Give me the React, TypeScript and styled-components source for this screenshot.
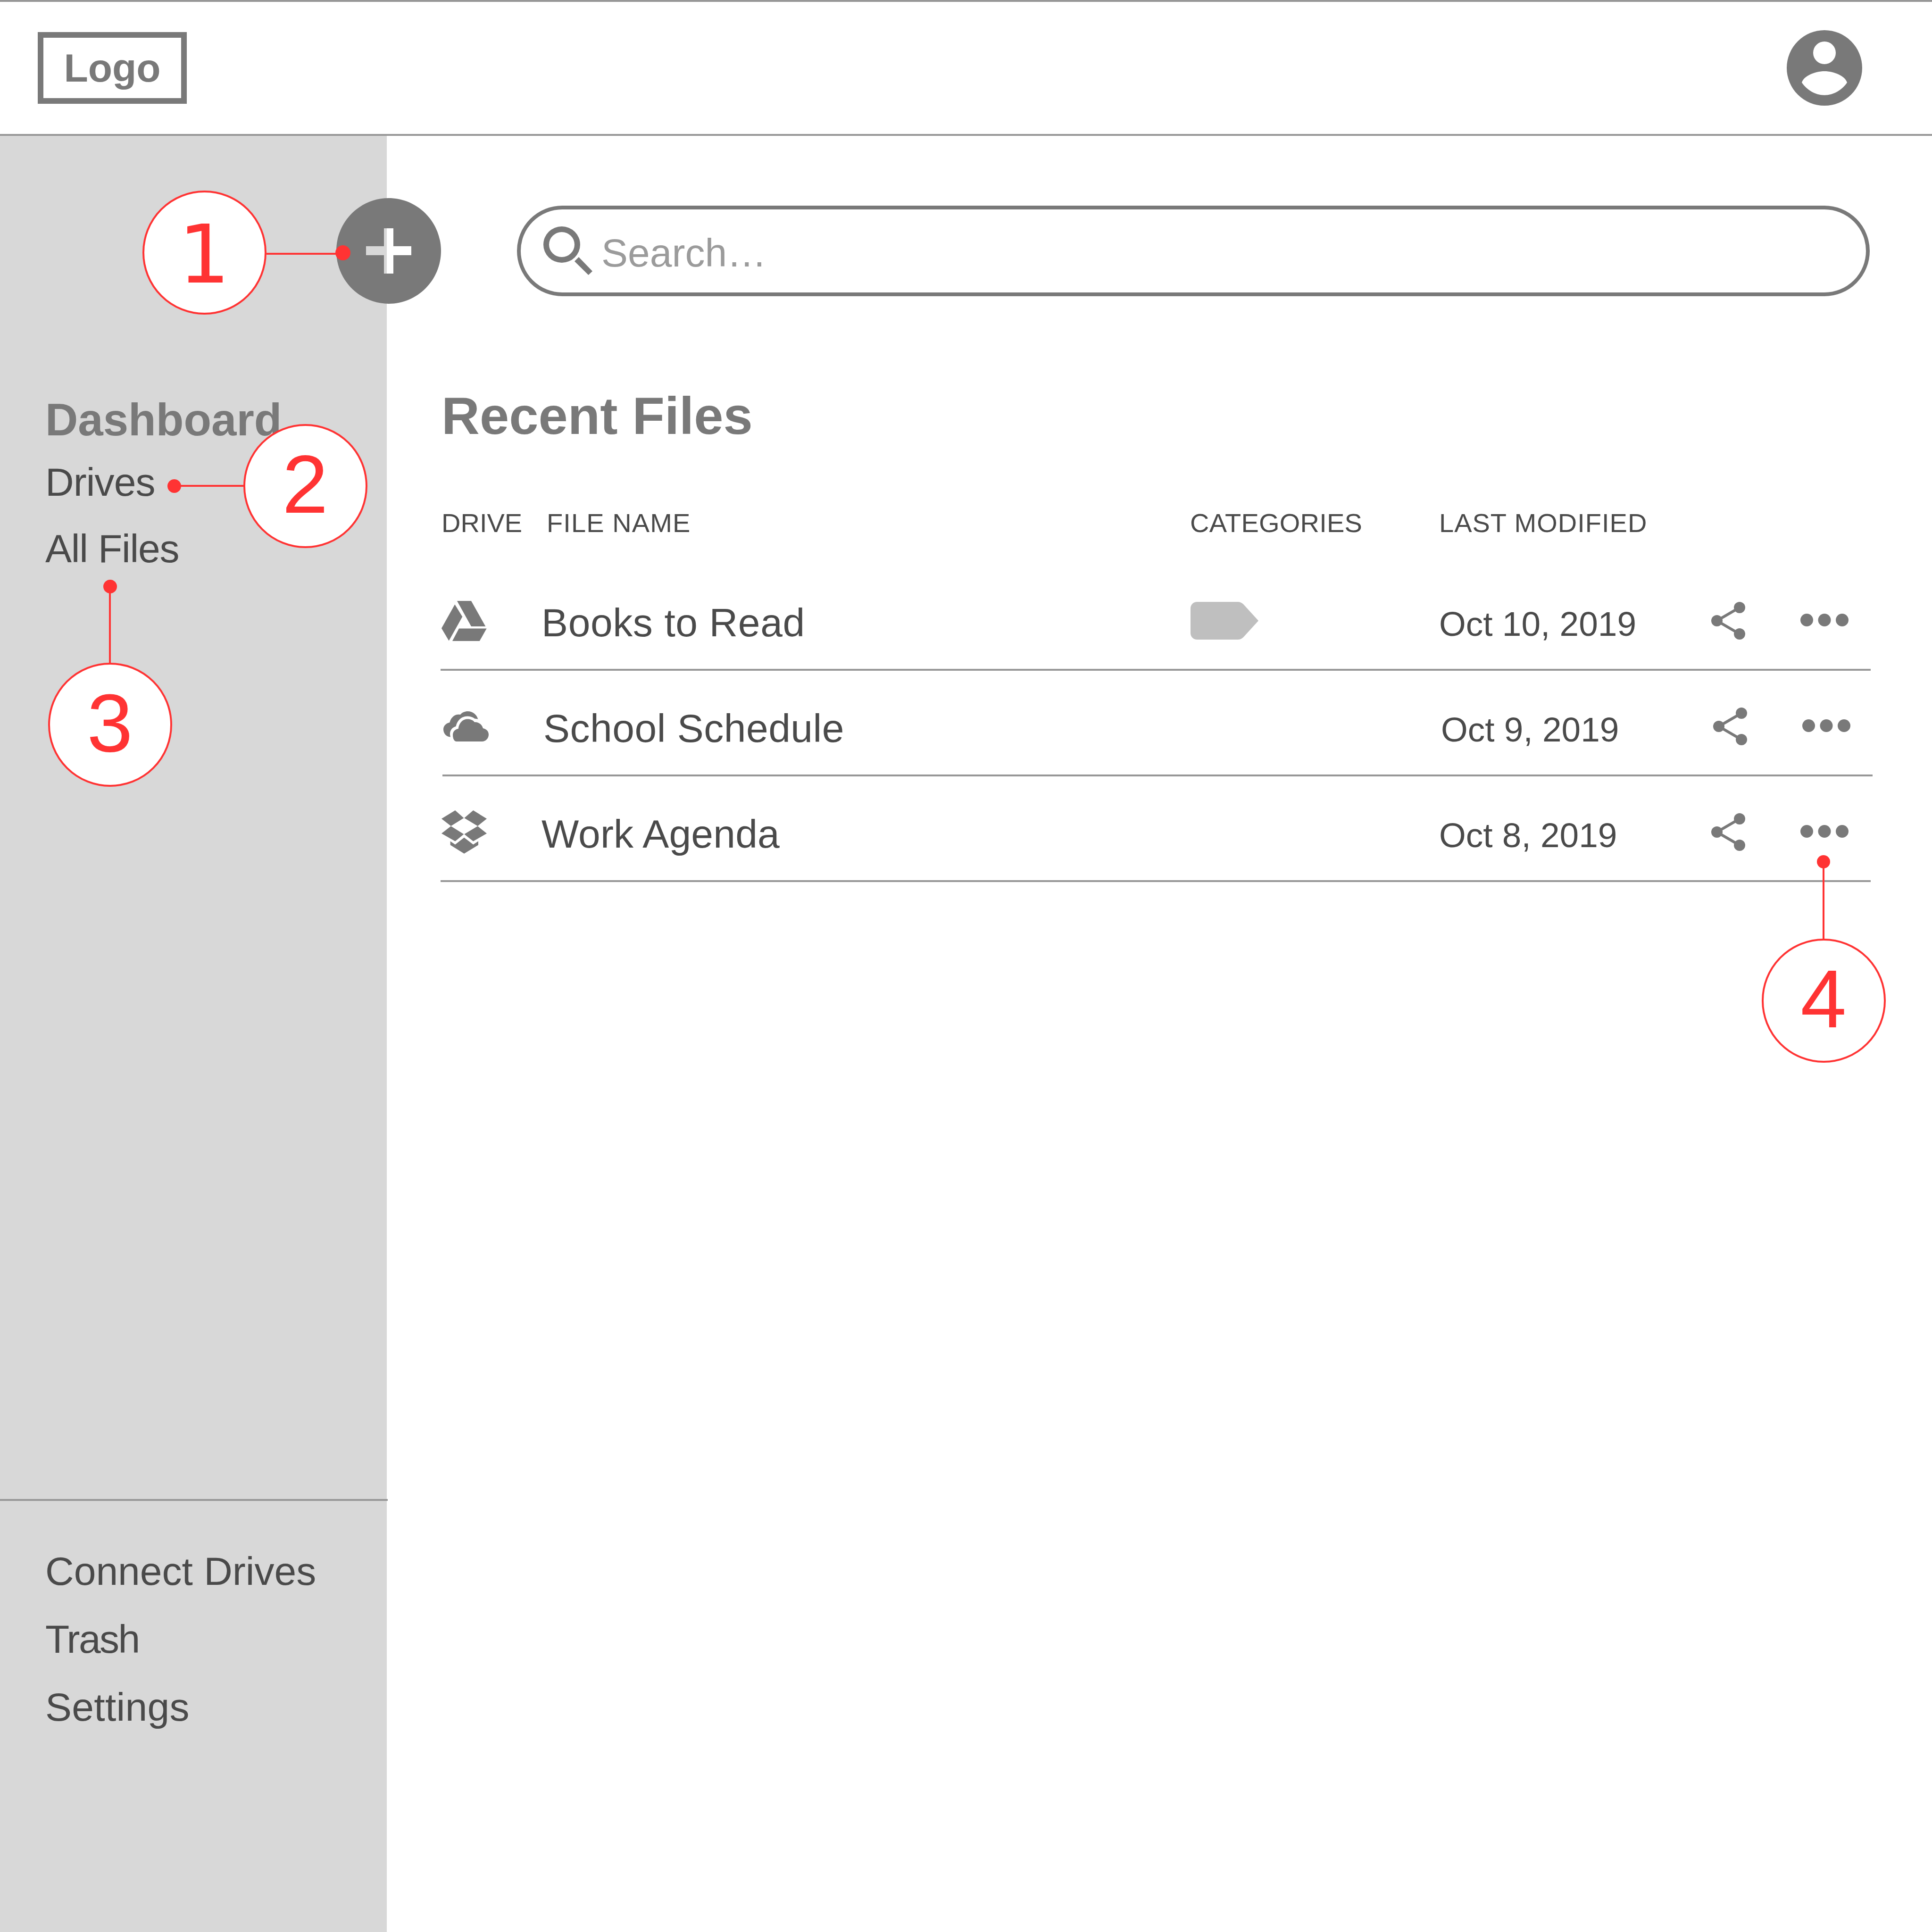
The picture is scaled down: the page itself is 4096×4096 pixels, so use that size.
import * as React from 'react';
import styled, { createGlobalStyle } from 'styled-components';

const GlobalStyle = createGlobalStyle`
  html, body {
    margin: 0;
    padding: 0;
    background: #fff;
  }
  * {
    box-sizing: border-box;
  }
`;

const Page = styled.div`
  position: relative;
  width: 4096px;
  height: 4096px;
  overflow: hidden;
  background: #fff;
  font-family: 'Liberation Sans', Arial, sans-serif;
  color: #4a4a4a;
`;

const Header = styled.header`
  display: flex;
  align-items: center;
  justify-content: space-between;
  height: 288px;
  padding: 0 148px 0 80px;
  border-top: 4px solid #979797;
  border-bottom: 4px solid #979797;
`;

const Logo = styled.div`
  display: flex;
  align-items: center;
  justify-content: center;
  width: 316px;
  height: 152px;
  border: 12px solid #797979;
  font-size: 84px;
  font-weight: 700;
  color: #797979;
`;

const Body = styled.div`
  display: flex;
  height: 3808px;
`;

const Sidebar = styled.aside`
  position: relative;
  display: flex;
  flex-direction: column;
  flex: 0 0 820px;
  padding-top: 547px;
  background: #d8d8d8;
  line-height: 141px;
`;

const AddButton = styled.svg`
  position: absolute;
  left: 713px;
  top: 132px;
  width: 222px;
  height: 224px;
`;

const NavTitle = styled.div`
  padding-left: 96px;
  margin-bottom: 7px;
  font-size: 96px;
  line-height: 110px;
  font-weight: 700;
  color: #797979;
`;

const NavItem = styled.div<{ $spacing?: number }>`
  padding-left: 96px;
  font-size: 84px;
  letter-spacing: ${(p) => p.$spacing ?? 0}px;
`;

const SideFooter = styled.div`
  margin-top: auto;
  margin-right: -2px;
  height: 918px;
  padding-top: 77px;
  border-top: 4px solid #979797;
  line-height: 144px;
`;

const Main = styled.main`
  flex: 1;
  padding: 148px 130px 0 114px;
`;

const SearchBar = styled.div`
  display: flex;
  align-items: center;
  gap: 19px;
  width: 2868px;
  height: 192px;
  margin-left: 162px;
  padding-left: 48px;
  border: 8px solid #797979;
  border-radius: 96px;
`;

const SearchText = styled.span`
  padding-top: 8px;
  font-size: 84px;
  color: #9b9b9b;
`;

const Title = styled.h1`
  margin: 189px 0 0 2px;
  font-size: 112px;
  line-height: 130px;
  font-weight: 700;
  color: #797979;
`;

const ColumnHeads = styled.div`
  display: grid;
  grid-template-columns: 223px 1364px 528px 1fr;
  margin: 127px 0 54px;
  padding-left: 2px;
  font-size: 56px;
  line-height: 70px;
`;

const ColumnHead = styled.div<{ $spacing?: number }>`
  letter-spacing: ${(p) => p.$spacing ?? 0}px;
`;

const Row = styled.div<{ $shift?: boolean }>`
  display: grid;
  grid-template-columns: 212px 1376px 527px 577px 189px 1fr;
  align-items: center;
  height: 224px;
  padding: 16px 0 0 2px;
  border-bottom: 4px solid #979797;
  margin: ${(p) => (p.$shift ? '0 -4px 0 4px' : '0')};
`;

const FileName = styled.div<{ $spacing?: number }>`
  padding-top: 8px;
  font-size: 84px;
  letter-spacing: ${(p) => p.$spacing ?? 0}px;
`;

const FileDate = styled.div`
  padding-top: 13px;
  font-size: 73px;
`;

const Icon = styled.svg`
  display: block;
  fill: #797979;
`;

const Bubble = styled.div<{ $cx: number; $cy: number; $footed?: boolean }>`
  position: absolute;
  left: ${(p) => p.$cx - 131.5}px;
  top: ${(p) => p.$cy - 131.5}px;
  display: flex;
  align-items: center;
  justify-content: center;
  width: 263px;
  height: 263px;
  padding: ${(p) => (p.$footed ? '9px 0 0' : '0 0 7px')};
  border: 4px solid #ff3333;
  border-radius: 50%;
  background: #fff;
  color: #ff3333;
  font-size: ${(p) => (p.$footed ? 172 : 175)}px;
  line-height: 1;
  font-family: ${(p) =>
    p.$footed ? "'DejaVu Sans', sans-serif" : "'Liberation Sans', Arial, sans-serif"};
`;

const Dot = styled.div<{ $cx: number; $cy: number; $size: number }>`
  position: absolute;
  left: ${(p) => p.$cx - p.$size / 2}px;
  top: ${(p) => p.$cy - p.$size / 2}px;
  width: ${(p) => p.$size}px;
  height: ${(p) => p.$size}px;
  border-radius: 50%;
  background: #ff3333;
`;

const LeaderH = styled.div<{ $left: number; $top: number; $length: number }>`
  position: absolute;
  left: ${(p) => p.$left}px;
  top: ${(p) => p.$top}px;
  width: ${(p) => p.$length}px;
  height: 4px;
  background: #ff3333;
`;

const LeaderV = styled.div<{ $left: number; $top: number; $length: number }>`
  position: absolute;
  left: ${(p) => p.$left}px;
  top: ${(p) => p.$top}px;
  width: 4px;
  height: ${(p) => p.$length}px;
  background: #ff3333;
`;

function Avatar() {
  return (
    <Icon width="160" height="160" viewBox="0 0 160 160">
      <path
        fillRule="evenodd"
        d="M80 0a80 80 0 1 0 0 160a80 80 0 1 0 0-160ZM80 24a24 24 0 1 1 0 48a24 24 0 1 1 0-48ZM32 111C36 97 60 87 80 87C100 87 124 97 128 111C118 126 100 137.7 80 137.7C60 137.7 42 126 32 111Z"
      />
    </Icon>
  );
}

function PlusIcon() {
  return (
    <AddButton viewBox="0 0 222 224">
      <path
        fill="#797979"
        fillRule="evenodd"
        d="M111 0C172 0 222 50 222 112C222 174 172 224 111 224C50 224 0 174 0 112C0 50 50 0 111 0ZM101 64V102H63V121H101V160H121V121H159V102H121V64Z"
      />
    </AddButton>
  );
}

function SearchIcon() {
  return (
    <Icon width="104" height="104" viewBox="0 0 104 104">
      <path
        fillRule="evenodd"
        d="M39 0a39 38.5 0 1 0 0 77a39 38.5 0 1 0 0-77ZM39 12a27 26.5 0 1 1 0 53a27 26.5 0 1 1 0-53Z"
      />
      <polygon points="66,74 75,65 104,95 95.500,103" />
    </Icon>
  );
}

function DriveIcon() {
  return (
    <Icon width="96" height="85" viewBox="0 0 96 85">
      <polygon points="33,0 63,0 93.300,54 63,54" />
      <polygon points="28.300,7.500 44.300,33.600 15.700,84.600 0,58" />
      <polygon points="37,58.500 95.700,58.500 80.700,85 23,85" />
    </Icon>
  );
}

function CloudIcon() {
  return (
    <Icon width="96" height="64" viewBox="0 0 96 64">
      <path d="M28 64H82C90 64 96 57 96 49.500C96 42 91 37.500 84 36C82 28 74 22 66 23C62 18 56 16.500 50.700 16.600C41 16.600 33 25 31.700 37C25 38 20 43 20 50C20 58 23 64 28 64Z" />
      <path d="M15 54.500C6 54 0 47 0 38C0 31 6 25 13.300 23.700C16 13 24 6 33 6.700L36 7C40 2 46 0 51.700 0C62 0 71 7 73.300 16.600C71 16 69 16 66.700 15.800C62 12 56 10.500 50.700 10.500C38 10.500 29 20 26.500 32C19 34 14 40 14 48C14 50 14.500 52 15 54.500Z" />
    </Icon>
  );
}

function DropboxIcon() {
  return (
    <Icon width="96" height="92" viewBox="0 0 96 92">
      <polygon points="29,0 47.300,16.200 20,33.200 0,17.800" />
      <polygon points="67.300,0 96,17.800 76.700,33.200 48.300,16.200" />
      <polygon points="20,33.600 47.300,50.600 29,65.600 0,49" />
      <polygon points="76.700,33.600 96,49 67.300,65.600 48.300,50.600" />
      <polygon points="18.700,65.600 29,72.400 48,57.700 67.300,72.400 78,65.600 78,73.500 48,91.700 18.700,73.500" />
    </Icon>
  );
}

function TagIcon() {
  return (
    <Icon width="144" height="80" viewBox="0 0 144 80">
      <path
        fill="#bfbfbf"
        d="M14 0H100C105 0 109 2 112 5L144 40L112 75C109 78 105 80 100 80H14C6 80 0 74 0 66V14C0 6 6 0 14 0Z"
      />
    </Icon>
  );
}

function ShareIcon() {
  return (
    <Icon width="72" height="80" viewBox="0 0 72 80">
      <path d="M12 40L60 12M12 40L60 68" stroke="#797979" strokeWidth="6" fill="none" />
      <ellipse cx="12" cy="40" rx="12" ry="12" />
      <ellipse cx="60" cy="12" rx="12" ry="12" />
      <ellipse cx="60" cy="68" rx="12" ry="12" />
    </Icon>
  );
}

function MoreIcon() {
  return (
    <Icon width="102" height="32" viewBox="0 0 102 32">
      <circle cx="13.500" cy="14.500" r="13.500" />
      <circle cx="51" cy="14.500" r="13.500" />
      <circle cx="88.500" cy="14.500" r="13.500" />
    </Icon>
  );
}

type FileRowProps = {
  icon: React.ReactNode;
  name: string;
  date: string;
  tagged?: boolean;
  shift?: boolean;
  spacing?: number;
};

function FileRow({ icon, name, date, tagged, shift, spacing }: FileRowProps) {
  return (
    <Row $shift={shift}>
      {icon}
      <FileName $spacing={spacing}>{name}</FileName>
      <div>{tagged && <TagIcon />}</div>
      <FileDate>{date}</FileDate>
      <ShareIcon />
      <MoreIcon />
    </Row>
  );
}

export default function App() {
  return (
    <Page>
      <GlobalStyle />
      <Header>
        <Logo>Logo</Logo>
        <Avatar />
      </Header>
      <Body>
        <Sidebar>
          <PlusIcon />
          <NavTitle>Dashboard</NavTitle>
          <NavItem $spacing={-0.9}>Drives</NavItem>
          <NavItem $spacing={-1.2}>All Files</NavItem>
          <SideFooter>
            <NavItem>Connect Drives</NavItem>
            <NavItem $spacing={-2.6}>Trash</NavItem>
            <NavItem $spacing={0.3}>Settings</NavItem>
          </SideFooter>
        </Sidebar>
        <Main>
          <SearchBar>
            <SearchIcon />
            <SearchText>Search…</SearchText>
          </SearchBar>
          <Title>Recent Files</Title>
          <ColumnHeads>
            <ColumnHead>DRIVE</ColumnHead>
            <ColumnHead $spacing={1.1}>FILE NAME</ColumnHead>
            <ColumnHead $spacing={0.2}>CATEGORIES</ColumnHead>
            <ColumnHead $spacing={1}>LAST MODIFIED</ColumnHead>
          </ColumnHeads>
          <FileRow icon={<DriveIcon />} name="Books to Read" date="Oct 10, 2019" tagged spacing={0.6} />
          <FileRow icon={<CloudIcon />} name="School Schedule" date="Oct 9, 2019" shift spacing={0.5} />
          <FileRow icon={<DropboxIcon />} name="Work Agenda" date="Oct 8, 2019" spacing={0.2} />
        </Main>
      </Body>

      {/* numbered callouts */}
      <LeaderH $left={565} $top={536} $length={162} />
      <Dot $cx={727} $cy={536} $size={32} />
      <Bubble $cx={433} $cy={535} $footed>1</Bubble>

      <LeaderH $left={369} $top={1028} $length={150} />
      <Dot $cx={369} $cy={1030} $size={29} />
      <Bubble $cx={647} $cy={1030}>2</Bubble>

      <LeaderV $left={231} $top={1243} $length={165} />
      <Dot $cx={233} $cy={1243} $size={29} />
      <Bubble $cx={233} $cy={1536}>3</Bubble>

      <LeaderV $left={3864} $top={1827} $length={165} />
      <Dot $cx={3866} $cy={1827} $size={28} />
      <Bubble $cx={3866} $cy={2121}>4</Bubble>
    </Page>
  );
}
